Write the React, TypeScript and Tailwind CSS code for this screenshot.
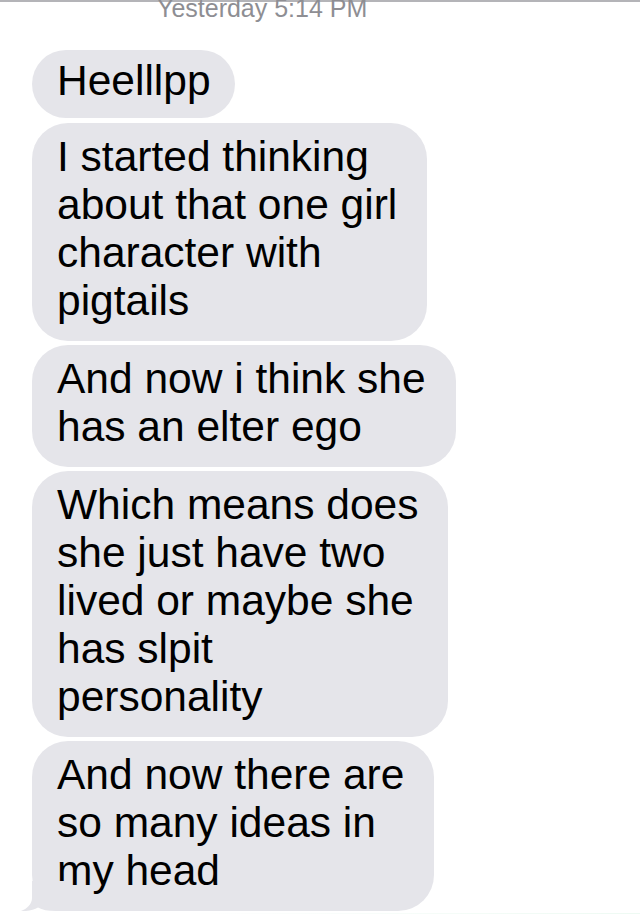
import React from "react";

const messages: string[][] = [
    ["Heelllpp"],
    ["I started thinking", "about that one girl", "character with", "pigtails"],
    ["And now i think she", "has an elter ego"],
    ["Which means does", "she just have two", "lived or maybe she", "has slpit", "personality"],
    ["And now there are", "so many ideas in", "my head"],
];

const Bubble = ({ lines, first, last }: { lines: string[]; first: boolean; last: boolean }) => {
    return (
        <div
            className={`relative w-fit bg-[#e5e5ea] pl-[25px] text-[42.5px] leading-[48px] text-black whitespace-nowrap ${
                first
                    ? "rounded-[34px] pt-[7px] pb-[13px] pr-[24px]"
                    : "rounded-[36px] pt-[10px] pb-[16px] pr-[30px] mt-[4px]"
            }`}
        >
            {lines.map((line, i) => (
                <div key={i}>{line}</div>
            ))}
            {last && (
                <svg
                    className="absolute left-[-12px] bottom-0"
                    width="48"
                    height="30"
                    viewBox="0 0 48 30"
                >
                    <path
                        d="M12 0 L12 17 C12 23 7 28 1 30 C8 30.5 14 28.8 18 26.5 C22 29 28 30 36 30 L48 30 L48 0 Z"
                        fill="#e5e5ea"
                    />
                </svg>
            )}
        </div>
    );
};

const App = () => {
    return (
        <div className="w-full h-[914px] overflow-hidden bg-white font-['Liberation_Sans',Arial,sans-serif]">
            <div className="h-[50px] border-t-2 border-[#b4b4b8]">
                <div className="-mt-[6px] pl-[157px] text-[25px] leading-[25px] text-[#8e8e93] font-medium">
                    Yesterday 5:14 PM
                </div>
            </div>

            <div className="flex flex-col items-start pl-[32px]">
                {messages.map((lines, i) => (
                    <div key={i} className={i === 1 ? "mt-[1px]" : ""}>
                        <Bubble lines={lines} first={i === 0} last={i === messages.length - 1} />
                    </div>
                ))}
            </div>

            <div className="mt-[2px] ml-[180px] h-[4px] bg-gradient-to-r from-white to-[#eefaf3]" />
        </div>
    );
};

export default App;
